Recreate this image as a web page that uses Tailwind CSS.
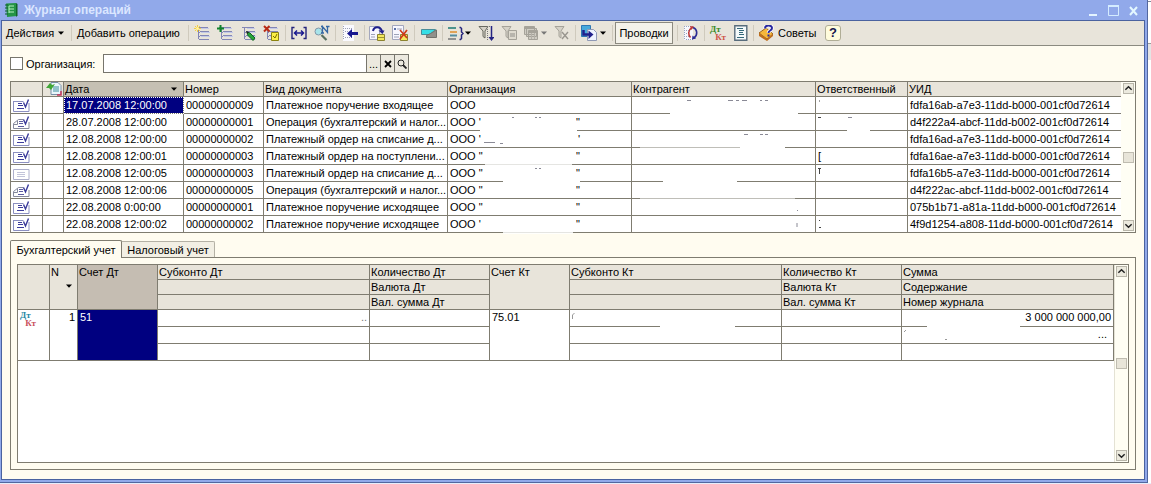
<!DOCTYPE html>
<html lang="ru">
<head>
<meta charset="utf-8">
<title>Журнал операций</title>
<script src="https://cdn.jsdelivr.net/npm/@tailwindcss/browser@4"></script>
</head>
<body class="bg-[#e6eefc] text-black text-[11px] leading-[14px]" style="font-family:'Liberation Sans',Arial,sans-serif">
<svg class="hidden">
  <symbol id="doc" viewBox="0 0 18 13"><path d="M.5 2.500h10M.5 2v10.500M.5 12.500h15.500V4" fill="none" stroke="#8b8fc0"/><path d="M5 4.500h4M5 6.500h5M4 9.500h7" stroke="#3c3c9c"/><path d="M10.500 3.500l2 4.500L15.500 0.500" fill="none" stroke="#3a3a9a" stroke-width="1.400"/></symbol>
  <symbol id="op" viewBox="0 0 18 13"><path d="M5.500 3.500h5M5.500 3.500L.5 7.500v5h15.500V6M.5 8.500h4v-4" fill="none" stroke="#85899c"/><path d="M6 5.500h4M6 7.500h4M5 10.500h6" stroke="#5c5ca0"/><path d="M10.500 3.500l2 4.500L15.500 0.500" fill="none" stroke="#3a3a9a" stroke-width="1.400"/></symbol>
  <symbol id="blank" viewBox="0 0 18 13"><path d="M.5 2.500h15.500v10h-15.500z" fill="none" stroke="#aeb0cc"/><path d="M4 5.500h8M4 7.500h8M4 9.500h8" stroke="#c3c5da"/></symbol>
  <symbol id="rows" viewBox="0 0 16 16"><path d="M2 2.500h12M6 6.500h9M6 10.500h9M5 14.500h10M4.500 3v11M4 7.500h2M4 11.500h2" fill="none" stroke="#8386b5"/><path d="M7 3.500h8M7 7.500h9M7 11.500h9" stroke="#c3c9e8"/></symbol>
  <symbol id="down" viewBox="0 0 6 4"><path d="M0 .5h6L3 3.800z"/></symbol>
  <symbol id="up-c" viewBox="0 0 10 10"><path d="M1.500 6.500L5 3l3.500 3.500" fill="none" stroke="#222" stroke-width="1.600"/></symbol>
  <symbol id="dn-c" viewBox="0 0 10 10"><path d="M1.500 3.500L5 7l3.500-3.500" fill="none" stroke="#222" stroke-width="1.600"/></symbol>
  <symbol id="funnel" viewBox="0 0 16 16"><path d="M1 1.500h9L7 6v7l-2-1.500V6z" fill="#d6d2c8" stroke="currentColor"/></symbol>
</svg>

<div class="min-h-screen flex pb-px">
<main class="flex-1 min-w-0 flex flex-col bg-[#91a9ea] border-b border-r border-[#52679f]">
  <header class="h-5 flex items-center pl-1 pr-[5px] gap-1">
    <svg class="size-4" viewBox="0 0 16 16"><path d="M2 1.500L12 1l1 13-10 1z" fill="#249447"/><path d="M12 1l1.500 1v11.500L12 15z" fill="#116329"/><path d="M5 4h5M5 7h5M5 10h5M5 4v7" stroke="#b6f0c1" fill="none"/><path d="M1 3h3M1 6h3M1 9h3M1 12h3" stroke="#135c2c"/></svg>
    <h1 class="flex-1 font-bold text-xs text-[#dbe6ff] leading-4">Журнал операций</h1>
    <button aria-label="Свернуть" class="w-4 h-4"><svg class="size-4" viewBox="0 0 16 16"><path d="M3 13h8" stroke="#e4f4ff" stroke-width="2"/></svg></button>
    <button aria-label="Развернуть" class="w-4 h-4"><svg class="size-4" viewBox="0 0 16 16"><path d="M2.500 4.500h10v9h-10z" fill="none" stroke="#d4ecff"/><path d="M2 4h11" stroke="#d4ecff" stroke-width="2"/></svg></button>
    <button aria-label="Закрыть" class="w-4 h-4"><svg class="size-4" viewBox="0 0 16 16"><path d="M4 5l7 8M11 5l-7 8" stroke="#e4f8ff" stroke-width="2"/></svg></button>
  </header>

  <div class="flex-1 flex flex-col ml-px mr-0.5 mb-0.5 bg-[#fffcf0] border border-[#4a629f]">
    <nav class="h-[25px] shrink-0 flex items-center bg-[#e8e4da] border-b border-[#8b8a80] pl-1 whitespace-nowrap">
      <button class="flex items-center gap-1 w-[60px]">Действия<svg class="w-1.5 h-1 shrink-0"><use href="#down"/></svg></button>
      <i class="w-px h-4 bg-[#cfcabd] ml-[5px] mr-[5px]"></i>
      <button class="w-[106px] text-left">Добавить операцию</button>
      <i class="w-px h-4 bg-[#cfcabd] ml-[5px] mr-[5px]"></i>
      <div class="flex gap-[7px]">
        <button aria-label="Добавить"><svg class="size-4 block" viewBox="0 0 16 16"><use href="#rows"/><path d="M3.500 0v7M0 3.500h7M1 1l5 5M6 1L1 6" stroke="#f5cf3e"/><circle cx="3.500" cy="3.500" r="1.500" fill="#fff3a0"/></svg></button>
        <button aria-label="Скопировать"><svg class="size-4 block" viewBox="0 0 16 16"><use href="#rows"/><path d="M3.500 0v7M0 3.500h7" stroke="#12842c" stroke-width="2"/></svg></button>
        <button aria-label="Изменить"><svg class="size-4 block" viewBox="0 0 16 16"><use href="#rows"/><path d="M7 7l3 1 5 5-2 2.500-5-5z" fill="#27a53b" stroke="#11651f"/><path d="M6 6l3 1-2 2z" fill="#222"/></svg></button>
        <button aria-label="Пометить на удаление"><svg class="size-4 block" viewBox="0 0 16 16"><use href="#rows"/><path d="M1 1l5.500 5.500M6.500 1L1 6.500" stroke="#b92b16" stroke-width="2"/><path d="M8.500 7.500h7v8h-7z" fill="#fbf046" stroke="#8c8310"/><path d="M10 11l2 2 2-4" fill="none" stroke="#7a6a00"/></svg></button>
      </div>
      <i class="w-px h-4 bg-[#cfcabd] ml-1.5 mr-[5px]"></i>
      <div class="flex gap-[7px]">
        <button aria-label="Интервал"><svg class="size-4 block" viewBox="0 0 16 16"><path d="M3.500 2.500H1v11h2.500M12.500 2.500H15v11h-2.500" fill="none" stroke="#24247c" stroke-width="1.400"/><path d="M4 8h8M6 5.500L3.500 8 6 10.500M10 5.500L12.500 8 10 10.500" fill="none" stroke="#1a1a90" stroke-width="1.500"/></svg></button>
        <button aria-label="Найти по номеру"><svg class="size-4 block" viewBox="0 0 16 16"><circle cx="4.500" cy="6.500" r="3.500" fill="#a8e4ea" stroke="#8296a8"/><path d="M7.500 10l5 5" stroke="#597060" stroke-width="2.200"/><path d="M8.500 8V1.500l5 6V1M7 1.500h2M12 1.500h3.500M7 8h3" fill="none" stroke="#3568a5" stroke-width="1.300"/></svg></button>
      </div>
      <i class="w-px h-4 bg-[#cfcabd] ml-[5px] mr-1.5"></i>
      <button aria-label="Перейти"><svg class="size-4 block" viewBox="0 0 16 16"><path d="M1 0h11v16H1z" fill="#fafaff"/><path d="M1.500 1v14M3 3.500h8M3 6.500h4M3 12.500h8" stroke="#9da2b8" stroke-dasharray="1 1"/><path d="M16 8.500H8" stroke="#17178f" stroke-width="3"/><path d="M5 8.500L10 4v9z" fill="#17178f"/></svg></button>
      <i class="w-px h-4 bg-[#cfcabd] ml-1.5 mr-1"></i>
      <div class="flex gap-[7px]">
        <button aria-label="Провести"><svg class="size-4 block" viewBox="0 0 16 16"><path d="M.5 1.500h10v13H.5z" fill="#f7f7ff" stroke="#a3a7bd"/><path d="M2 9.500h4M2 12h4" stroke="#9da2b8"/><path d="M8.500 9.500h7v6h-7z" fill="#f3e85e" stroke="#8c8330"/><path d="M9 12.500h6" stroke="#9e9430"/><path d="M4 6C5 1 11 1 13 6" fill="none" stroke="#20208c" stroke-width="2"/><path d="M9.500 5.500h6L13.500 9z" fill="#20208c"/></svg></button>
        <button aria-label="Отмена проведения"><svg class="size-4 block" viewBox="0 0 16 16"><path d="M.5 .5h11v14H.5z" fill="#f7f7ff" stroke="#a3a7bd"/><path d="M2 3h2v2H2z" fill="#5a70a8"/><path d="M5 4h5M2 9.500h5M2 12h5" stroke="#9da2b8"/><path d="M8.500 9.500h7v6h-7z" fill="#f3e85e" stroke="#8c8330"/><path d="M8 5l7 8M15 5l-7 9" stroke="#cf3a18" stroke-width="1.700"/></svg></button>
      </div>
      <i class="w-px h-4 bg-[#cfcabd] ml-1.5 mr-1.5"></i>
      <button aria-label="Ввести на основании"><svg class="size-4 block" viewBox="0 0 16 16"><path d="M.5 4.500h14L9 9.500H.5z" fill="#35dfe6" stroke="#4a8c98"/><path d="M9.500 8.500L15.500 5v7.500H5.500v-2z" fill="#91918c" stroke="#72726c"/></svg></button>
      <i class="w-px h-4 bg-[#cfcabd] ml-[5px] mr-[5px]"></i>
      <div class="flex gap-[7px]">
        <button aria-label="Группировка" class="flex items-center gap-px"><svg class="size-4 block" viewBox="0 0 16 16"><path d="M0 3h8" stroke="#4e948d" stroke-width="2"/><path d="M2 7h7" stroke="#e1a357" stroke-width="2"/><path d="M2 10.500h7" stroke="#558c9f" stroke-width="2"/><path d="M0 14h8" stroke="#777" stroke-width="1.500"/><path d="M11.500 2.500h1l1 1v3.500l1.500 1.500-1.500 1.500v3.500l-1 1h-1" fill="none" stroke="#25257d" stroke-width="1.500"/></svg><svg class="w-1.5 h-1"><use href="#down"/></svg></button>
        <button aria-label="Отбор и сортировка"><svg class="size-4 block text-[#68685f]" viewBox="0 0 16 16"><use href="#funnel"/><path d="M9.500 4v12M9 1.500h5" stroke="#777" stroke-dasharray="1 1"/><path d="M13.500 1v12" stroke="#252583" stroke-width="1.500"/><path d="M10.500 12h6l-3 4z" fill="#252583"/></svg></button>
        <button aria-label="Отбор по значению"><svg class="size-4 block text-[#a5a299]" viewBox="0 0 16 16"><use href="#funnel"/><path d="M7.500 5.500h8v9h-8z" fill="#dedacf" stroke="#a5a299"/><path d="M9 8h5v4H9z" fill="#b7b4ac"/></svg></button>
        <button aria-label="История отборов" class="flex items-center gap-px"><svg class="size-4 block" viewBox="0 0 16 16"><path d="M.5 1.500h10v8h-10zM2.500 3.500h10v8h-10zM4.500 5.500h9v9h-9z" fill="#cfccc3" stroke="#a5a299"/><path d="M1 2h10v2H1zM5 6h8v2H5z" fill="#a5a299"/><path d="M7.500 8v6M10.500 8v6" stroke="#b3b0a8"/></svg><svg class="w-1.5 h-1 fill-[#777]"><use href="#down"/></svg></button>
        <button aria-label="Отключить отбор"><svg class="size-4 block text-[#a5a299]" viewBox="0 0 16 16"><use href="#funnel"/><path d="M8 7l6 7M14 7l-6 7" stroke="#99968f" stroke-width="1.400"/></svg></button>
      </div>
      <i class="w-px h-4 bg-[#cfcabd] ml-[5px] mr-[5px]"></i>
      <button aria-label="Перейти к" class="flex items-center gap-px"><svg class="size-4 block" viewBox="0 0 16 16"><path d="M.5 .5h9v11h-9z" fill="#48a9dc" stroke="#2f78b4"/><path d="M6.500 4.500h6l3 3v8h-9z" fill="#eef3ff" stroke="#8f99b5"/><path d="M2.500 5v4.500H8" fill="none" stroke="#21218c" stroke-width="2.500"/><path d="M7.500 5.500L12.500 9.500 7.500 14z" fill="#21218c"/></svg><svg class="w-1.5 h-1 ml-0.5"><use href="#down"/></svg></button>
      <i class="w-px h-4 bg-[#cfcabd] ml-1.5 mr-0.5"></i>
      <button class="w-[58px] h-[22px] bg-[#f4f2ea] border border-[#8c8a80]">Проводки</button>
      <i class="w-px h-4 bg-[#cfcabd] ml-1 mr-[5px]"></i>
      <button aria-label="Обновить"><svg class="size-4 block" viewBox="0 0 16 16"><path d="M1 1h9v14H1z" fill="#f6f7fc"/><path d="M1.500 1v14M3 1.500h7M3 14.500h7M3 5.500h3M3 8.500h2M3 11.500h3" stroke="#98a3c0" stroke-dasharray="1 1"/><path d="M8.500 3C5 5 5 10 7.500 12.500" fill="none" stroke="#c03a3a" stroke-width="1.600"/><path d="M10 2.500c4.500 1.500 5 7.500 1 10.500" fill="none" stroke="#2c2c94" stroke-width="1.600"/><path d="M7 1l4 .5-2.500 3.500z" fill="#c03a3a"/><path d="M9 14.500l.5-4 3.500 3z" fill="#2c2c94"/></svg></button>
      <i class="w-px h-4 bg-[#cfcabd] ml-[5px] mr-[5px]"></i>
      <button aria-label="Проводки документа" class="w-4 h-4 flex flex-col text-[9px] leading-[8px] font-bold" style="font-family:'Liberation Serif',serif"><span class="self-start text-[#3c8a28]">Дт</span><span class="self-end text-[#cf5548]">Кт</span></button>
      <button aria-label="Отчет" class="ml-2"><svg class="w-[14px] h-4 block" viewBox="0 0 14 16"><path d="M.8 .8h12v14.400H.8z" fill="#f4f9fa" stroke="#596d7c" stroke-width="1.400"/><path d="M3 3.500h6M5 5.500h5M5 7.500h4M5 9.500h5M3 12.500h7" stroke="#35697b"/></svg></button>
      <i class="w-px h-4 bg-[#cfcabd] ml-[5px] mr-[5px]"></i>
      <button class="flex items-center gap-[3px] w-[58px]"><svg class="size-4 block shrink-0" viewBox="0 0 16 16"><path d="M0 8l7-5 7 6-6 5z" fill="#f6b73c" stroke="#9e641b"/><path d="M0 8v3l8 5 6-5V9l-6 5z" fill="#c06d1c"/><path d="M6 3.500c0-4 7-4 7-.5 0 3-3.500 2-3.500 5" fill="none" stroke="#fff" stroke-width="3.500"/><path d="M6 3.500c0-4 7-4 7-.5 0 3-3.500 2-3.500 5M9.500 9.500v2" fill="none" stroke="#2828a0" stroke-width="2"/></svg>Советы</button>
      <button aria-label="Справка" class="ml-2 size-4 rounded-[3px] border border-[#b0ad96] bg-[#fffcdc] font-bold text-[13px] leading-[14px] text-[#16164c]">?</button>
    </nav>

    <form class="flex items-center h-[19px] mt-2 ml-2">
      <input id="org-on" type="checkbox" class="appearance-none size-[13px] bg-white border border-[#77756c]">
      <label for="org-on" class="ml-[3px] w-[77px]">Организация:</label>
      <input aria-label="Организация" class="w-[264px] h-[19px] bg-white border border-[#77756c] px-1">
      <button type="button" aria-label="Выбрать" class="w-[15px] h-[19px] -ml-px bg-[#ece9df] border border-[#77756c]">...</button>
      <button type="button" aria-label="Очистить" class="w-[15px] h-[19px] -ml-px bg-[#ece9df] border border-[#77756c] flex items-center justify-center"><svg class="size-2" viewBox="0 0 8 8"><path d="M1 1l6 6M7 1L1 7" stroke="#000" stroke-width="1.800"/></svg></button>
      <button type="button" aria-label="Открыть" class="w-[15px] h-[19px] -ml-px bg-[#ece9df] border border-[#77756c] flex items-center justify-center"><svg class="size-2.5" viewBox="0 0 10 10"><circle cx="4" cy="4" r="3" fill="none" stroke="#222"/><path d="M6 6l3.500 3.500" stroke="#222" stroke-width="1.800"/></svg></button>
    </form>

    <section class="relative mt-2 ml-2 mr-2 flex bg-white border border-[#7f7c70]">
      <table class="flex-1 table-fixed w-full border-separate border-spacing-0 whitespace-nowrap text-left [&_td]:border-r [&_td]:border-b [&_td]:border-[#7f7c70] [&_td]:h-[17px] [&_td]:p-0 [&_td]:pl-0.5 [&_td]:overflow-hidden [&_td:last-child]:border-r-0 [&_tr:last-child>td]:border-b-0 [&_tr:last-child>td]:h-4 [&_th]:border-r [&_th]:border-b [&_th]:border-[#7f7c70] [&_th]:h-[15px] [&_th]:p-0 [&_th]:pl-px [&_th]:font-normal [&_th:last-child]:border-r-0">
        <colgroup><col class="w-8"><col class="w-[21px]"><col class="w-[120px]"><col class="w-20"><col class="w-[184px]"><col class="w-[184px]"><col class="w-[184px]"><col class="w-[92px]"><col></colgroup>
        <thead class="bg-[#e8e4da]"><tr><th></th>
          <th><svg class="w-4 h-[14px] block ml-0.5" viewBox="0 0 16 14"><path d="M5 .5h7l3 3v9H5z" fill="#eaf6fb" stroke="#7890a8"/><path d="M7 5h6M7 7h6M7 9h6" stroke="#3c8f9c"/><path d="M0 6l4-5 2 2 3-1-4 6-2-2z" fill="#41a637"/><path d="M11 13h4v-4" fill="none" stroke="#c8385c" stroke-width="1.500"/></svg></th>
          <th class="bg-[#c5c0b3]"><div class="flex items-center justify-between pr-1.5">Дата<svg class="w-1.5 h-1"><use href="#down"/></svg></div></th><th>Номер</th><th>Вид документа</th><th>Организация</th><th>Контрагент</th><th>Ответственный</th><th>УИД</th></tr></thead>
        <tbody>
          <tr><td><svg class="w-[18px] h-[13px] block"><use href="#doc"/></svg></td><td></td><td class="bg-[#000080] text-white outline-1 outline-dotted outline-white -outline-offset-1">17.07.2008 12:00:00</td><td>00000000009</td><td>Платежное поручение входящее</td><td>ООО</td><td></td><td></td><td>fdfa16ab-a7e3-11dd-b000-001cf0d72614</td></tr>
          <tr><td><svg class="w-[18px] h-[13px] block"><use href="#op"/></svg></td><td></td><td>28.07.2008 12:00:00</td><td>00000000001</td><td>Операция (бухгалтерский и налог...</td><td><span class="inline-block w-[126px]">ООО '</span>"</td><td></td><td></td><td>d4f222a4-abcf-11dd-b002-001cf0d72614</td></tr>
          <tr><td><svg class="w-[18px] h-[13px] block"><use href="#doc"/></svg></td><td></td><td>12.08.2008 12:00:00</td><td>00000000002</td><td>Платежный ордер на списание д...</td><td><span class="inline-block w-[128px]">ООО '</span>'</td><td></td><td></td><td>fdfa16ad-a7e3-11dd-b000-001cf0d72614</td></tr>
          <tr><td><svg class="w-[18px] h-[13px] block"><use href="#doc"/></svg></td><td></td><td>12.08.2008 12:00:01</td><td>00000000003</td><td>Платежный ордер на поступлени...</td><td><span class="inline-block w-[126px]">ООО "</span>"</td><td></td><td>[</td><td>fdfa16ae-a7e3-11dd-b000-001cf0d72614</td></tr>
          <tr><td><svg class="w-[18px] h-[13px] block"><use href="#blank"/></svg></td><td></td><td>12.08.2008 12:00:05</td><td>00000000003</td><td>Платежный ордер на списание д...</td><td><span class="inline-block w-[126px]">ООО "</span>"</td><td></td><td></td><td>fdfa16b5-a7e3-11dd-b000-001cf0d72614</td></tr>
          <tr><td><svg class="w-[18px] h-[13px] block"><use href="#op"/></svg></td><td></td><td>12.08.2008 12:00:06</td><td>00000000005</td><td>Операция (бухгалтерский и налог...</td><td><span class="inline-block w-[126px]">ООО "</span>"</td><td></td><td></td><td>d4f222ac-abcf-11dd-b002-001cf0d72614</td></tr>
          <tr><td><svg class="w-[18px] h-[13px] block"><use href="#doc"/></svg></td><td></td><td>22.08.2008 0:00:00</td><td>00000000001</td><td>Платежное поручение исходящее</td><td><span class="inline-block w-[126px]">ООО "</span>"</td><td></td><td></td><td>075b1b71-a81a-11dd-b000-001cf0d72614</td></tr>
          <tr><td><svg class="w-[18px] h-[13px] block"><use href="#doc"/></svg></td><td></td><td>22.08.2008 12:00:02</td><td>00000000002</td><td>Платежное поручение исходящее</td><td><span class="inline-block w-[126px]">ООО '</span>"</td><td></td><td></td><td>4f9d1254-a808-11dd-b000-001cf0d72614</td></tr>
        </tbody>
      </table>
      <div class="w-[14px] shrink-0 flex flex-col items-center justify-between bg-[#fffef4] py-px">
        <button aria-label="Вверх" class="size-[11px] bg-[#eceade] border border-[#b9b6aa]"><svg class="size-[9px] block"><use href="#up-c"/></svg></button>
        <i class="size-[11px] bg-[#e8e5d9] border border-[#bfbcb0]"></i>
        <button aria-label="Вниз" class="size-[11px] bg-[#eceade] border border-[#b9b6aa]"><svg class="size-[9px] block"><use href="#dn-c"/></svg></button>
      </div>
      <!-- Erased private data: white strokes over the grid with leftover specks -->
      <svg class="absolute left-0 top-0 w-[896px] h-[151px] overflow-visible pointer-events-none" viewBox="11 82 896 151">
        <g fill="#fff"><path d="M480 129h97v3h-97zM503 180h77v3h-77zM670 112h128v3H670zM740 146h45v3h-45zM663 180h74v3h-74zM847 129h23v3h-23z"/><path opacity=".8" d="M485 163h87v3h-87zM503 231h70v3h-70z"/><path opacity=".5" d="M640 197h155v3H640zM640 146h100v3H640z"/></g>
        <path d="M687 100.500h4M728 100.500h5M736 100.500h3M742 100.500h5M760 100.500h2M765 100.500h3M744 134.500h4M760 134.500h3M765 134.500h3M535 117.500h2M539 117.500h2M512 117.500h2M484 142.500h11M500 143.500h3M535 168.500h2M539 168.500h2M848 117.500h4M797 210.500h1M797 223v4" stroke="#8a8a96" fill="none"/>
        <path d="M819 101h1M818 117.500h3M819.500 168v6M818 168.500h3M819.500 220v1M819 227.500h2" stroke="#444" fill="none"/>
      </svg>
    </section>

    <div class="flex items-end mt-[7px] ml-2 h-[17px]" role="tablist">
      <button role="tab" aria-selected="true" class="relative w-28 h-[18px] -mb-px bg-[#fffcf0] border border-b-0 border-[#7f7c70] rounded-t-[2px] whitespace-nowrap">Бухгалтерский учет</button>
      <button role="tab" aria-selected="false" class="w-[93px] h-4 bg-[#f2efe4] border border-l-0 border-b-0 border-[#b4b1a5] rounded-tr-[2px] whitespace-nowrap">Налоговый учет</button>
    </div>
    <section class="flex-1 flex ml-2 mr-2 mb-[9px] p-1.5 border border-[#7f7c70]">
      <div class="relative flex-1 flex bg-white border border-[#7f7c70]">
        <div class="flex-1">
        <table class="w-full table-fixed border-separate border-spacing-0 whitespace-nowrap text-left align-top [&_td]:align-top [&_th]:align-top [&_td]:border-r [&_td]:border-b [&_td]:border-[#7f7c70] [&_td]:h-[17px] [&_td]:p-0 [&_td]:px-0.5 [&_th]:border-r [&_th]:border-b [&_th]:border-[#7f7c70] [&_th]:h-[15px] [&_th]:p-0 [&_th]:pl-px [&_th]:font-normal">
          <colgroup><col class="w-8"><col class="w-7"><col class="w-20"><col class="w-[212px]"><col class="w-[120px]"><col class="w-20"><col class="w-[212px]"><col class="w-[120px]"><col></colgroup>
          <thead class="bg-[#e8e4da]">
            <tr><th rowspan="3"></th><th rowspan="3">N<svg class="w-1.5 h-1 ml-[15px] mt-[5px]"><use href="#down"/></svg></th><th rowspan="3" class="bg-[#c5bdb2]">Счет Дт</th><th>Субконто Дт</th><th>Количество Дт</th><th rowspan="3">Счет Кт</th><th>Субконто Кт</th><th>Количество Кт</th><th class="border-r-0">Сумма</th></tr>
            <tr><th></th><th>Валюта Дт</th><th></th><th>Валюта Кт</th><th class="border-r-0">Содержание</th></tr>
            <tr><th></th><th>Вал. сумма Дт</th><th></th><th>Вал. сумма Кт</th><th class="border-r-0">Номер журнала</th></tr>
          </thead>
          <tbody>
            <tr><td rowspan="3"><div class="w-4 flex flex-col pt-px text-[9px] leading-[8px] font-bold" style="font-family:'Liberation Serif',serif"><span class="self-start text-[#2788a5]">Дт</span><span class="self-end text-[#c9505c]">Кт</span></div></td><td rowspan="3" class="text-right">1</td><td rowspan="3" class="bg-[#000080] text-white">51</td><td class="text-right text-[#777]">..</td><td></td><td rowspan="3">75.01</td><td></td><td></td><td class="border-r-0 text-right">3 000 000 000,00</td></tr>
            <tr><td></td><td></td><td></td><td></td><td class="border-r-0 text-right"><span class="pr-1">...</span></td></tr>
            <tr><td></td><td></td><td></td><td></td><td class="border-r-0"></td></tr>
          </tbody>
        </table>
        </div>
        <div class="w-[14px] shrink-0 flex flex-col items-center justify-between bg-[#fffef4] border-l border-[#e4e2d4] py-px">
          <button aria-label="Вверх" class="size-[11px] bg-[#eceade] border border-[#b9b6aa]"><svg class="size-[9px] block"><use href="#up-c"/></svg></button>
          <i class="size-[11px] bg-[#e8e5d9] border border-[#bfbcb0]"></i>
          <button aria-label="Вниз" class="size-[11px] bg-[#eceade] border border-[#b9b6aa]"><svg class="size-[9px] block"><use href="#dn-c"/></svg></button>
        </div>
        <svg class="absolute left-0 top-0 w-[1096px] h-24 pointer-events-none" viewBox="18 265 1096 96"><path d="M660 325h75v3h-75zM927 325h93v3h-93z" fill="#fff"/><path d="M572.500 319v-4l2-2M904 332l2-2M945 339.500h2" stroke="#999" fill="none"/></svg>
      </div>
    </section>
  </div>
</main>
<!-- Edge of the window behind -->
<aside class="w-[3px] flex flex-col bg-white">
  <i class="h-0.5 border-b border-[#7f8699]"></i>
  <i class="h-[42px] border-b border-[#9a9a9a]"></i>
  <i class="h-4 bg-[#e4e4e4]"></i>
</aside>
</div>
</body>
</html>
